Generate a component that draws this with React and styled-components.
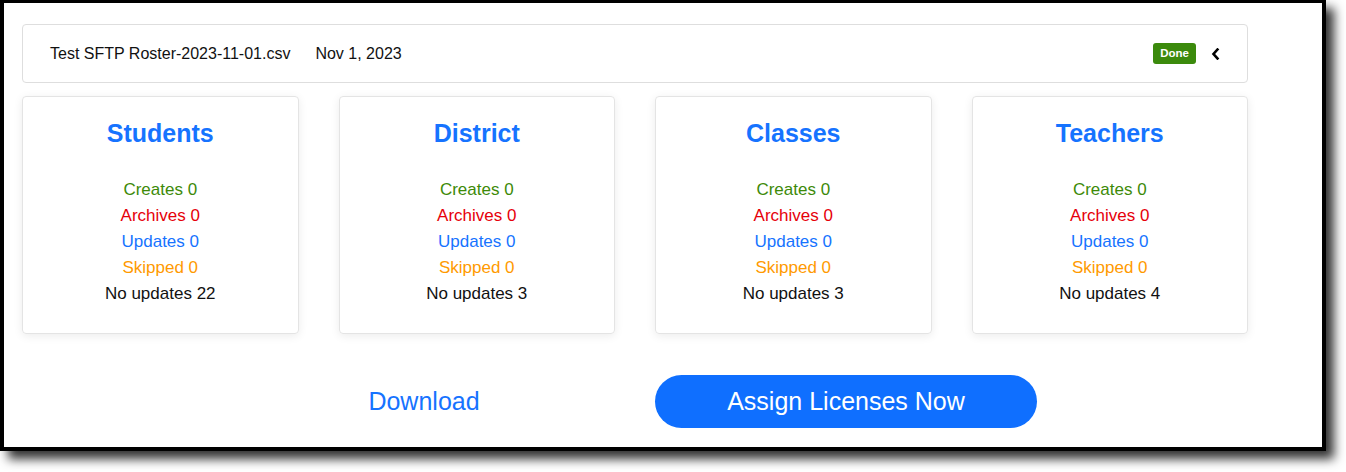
import React from "react";
import styled, { createGlobalStyle } from "styled-components";

const GlobalStyle = createGlobalStyle`
  body {
    margin: 0;
    min-height: 472px;
    background: #fff;
    font-family: "Liberation Sans", Arial, sans-serif;
  }
`;

const Page = styled.div`
  height: 472px;
`;

const Frame = styled.div`
  width: 1318px;
  height: 444px;
  box-sizing: content-box;
  border: 4px solid #000;
  border-top-width: 3px;
  background: #fff;
  box-shadow: 8px 8px 10px rgba(0, 0, 0, 0.8);
`;

const Content = styled.div`
  width: 1226px;
  padding: 21px 0 0 18px;
  display: flex;
  flex-direction: column;
`;

const FileBar = styled.div`
  height: 57px;
  border: 1px solid #dedede;
  border-radius: 4px;
  display: flex;
  align-items: center;
  padding: 0 27px 0 27px;
  font-size: 16px;
  color: #111;
`;

const FileName = styled.span`
  margin-right: 25px;
`;

const Spacer = styled.div`
  flex: 1;
`;

const Badge = styled.span`
  background: #3b8a0c;
  color: #fff;
  font-weight: 700;
  font-size: 11.5px;
  line-height: 21px;
  padding: 0 7px;
  border-radius: 3px;
`;

const Toggle = styled.button`
  border: 0;
  background: none;
  padding: 0;
  margin-left: 15px;
  display: flex;
  align-items: center;
  cursor: pointer;
`;

const Grid = styled.div`
  display: grid;
  grid-template-columns: repeat(4, 1fr);
  column-gap: 40px;
  margin-top: 13px;
`;

const Card = styled.div`
  height: 238px;
  box-sizing: border-box;
  border: 1px solid #e4e4e4;
  border-radius: 4px;
  box-shadow: 0 2px 10px rgba(0, 0, 0, 0.08);
  padding: 21px 10px 0;
  text-align: center;
`;

const Title = styled.h2`
  margin: 0 0 29px;
  font-size: 25px;
  line-height: 30px;
  font-weight: 700;
  color: #1673ff;
`;

const Stat = styled.div`
  font-size: 17px;
  line-height: 26px;
  color: ${(p) => p.color};
`;

const Actions = styled.div`
  display: flex;
  justify-content: center;
  gap: 40px;
  margin-top: 41px;
`;

const ActionButton = styled.button`
  width: 382px;
  height: 53px;
  border: 0;
  border-radius: 27px;
  font-family: inherit;
  font-size: 25px;
  cursor: pointer;
  background: ${(p) => (p.primary ? "#0f6fff" : "transparent")};
  color: ${(p) => (p.primary ? "#fff" : "#1673ff")};
`;

const colors = {
  creates: "#3d8a08",
  archives: "#e6000a",
  updates: "#1673ff",
  skipped: "#ff9a00",
  none: "#111",
};

const groups = [
  { title: "Students", noUpdates: 22 },
  { title: "District", noUpdates: 3 },
  { title: "Classes", noUpdates: 3 },
  { title: "Teachers", noUpdates: 4 },
];

const App = () => (
  <Page>
    <GlobalStyle />
    <Frame>
      <Content>
        <FileBar>
          <FileName>Test SFTP Roster-2023-11-01.csv</FileName>
          <span>Nov 1, 2023</span>
          <Spacer />
          <Badge>Done</Badge>
          <Toggle aria-label="collapse">
            <svg width="9" height="12" viewBox="0 0 9 12">
              <path
                d="M6.5 1.5 L2.5 6 L6.5 10.5"
                fill="none"
                stroke="#000"
                strokeWidth="2.6"
                strokeLinecap="square"
              />
            </svg>
          </Toggle>
        </FileBar>
        <Grid>
          {groups.map((g) => (
            <Card key={g.title}>
              <Title>{g.title}</Title>
              <Stat color={colors.creates}>Creates 0</Stat>
              <Stat color={colors.archives}>Archives 0</Stat>
              <Stat color={colors.updates}>Updates 0</Stat>
              <Stat color={colors.skipped}>Skipped 0</Stat>
              <Stat color={colors.none}>No updates {g.noUpdates}</Stat>
            </Card>
          ))}
        </Grid>
        <Actions>
          <ActionButton>Download</ActionButton>
          <ActionButton primary>Assign Licenses Now</ActionButton>
        </Actions>
      </Content>
    </Frame>
  </Page>
);

export default App;
